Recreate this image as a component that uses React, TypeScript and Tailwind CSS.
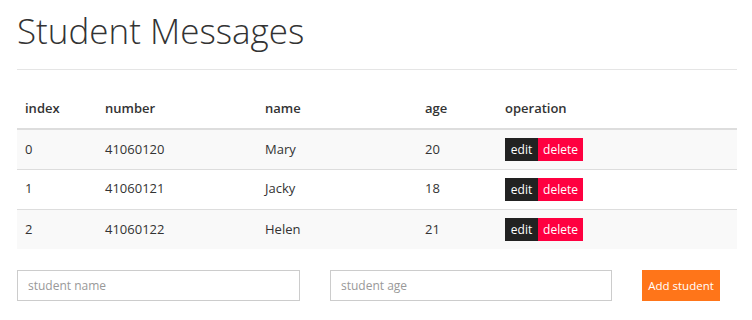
const students = [
  { index: 0, number: "41060120", name: "Mary", age: 20 },
  { index: 1, number: "41060121", name: "Jacky", age: 18 },
  { index: 2, number: "41060122", name: "Helen", age: 21 },
];

export default function App() {
  return (
    <div className="w-[752px] h-[320px] bg-white text-[#333] font-['Open_Sans',sans-serif] overflow-hidden">
      <div className="w-[720px] ml-[17px]">
        <h1 className="pt-[11px] h-[70px] text-[35px] font-light leading-[40px] border-b border-[#e5e5e5]">
          Student Messages
        </h1>

        <table className="mt-[19px] w-[720px] table-fixed border-collapse text-[13px]">
          <colgroup>
            <col className="w-[80px]" />
            <col className="w-[160px]" />
            <col className="w-[160px]" />
            <col className="w-[80px]" />
            <col />
          </colgroup>
          <thead>
            <tr className="h-[40px] border-b-2 border-[#ddd]">
              <th className="pl-2 text-left font-semibold">index</th>
              <th className="pl-2 text-left font-semibold">number</th>
              <th className="pl-2 text-left font-semibold">name</th>
              <th className="pl-2 text-left font-semibold">age</th>
              <th className="pl-2 text-left font-semibold">operation</th>
            </tr>
          </thead>
          <tbody>
            {students.map((s, i) => (
              <tr
                key={s.index}
                className={`h-[40px] ${i % 2 === 0 ? "bg-[#f9f9f9]" : "bg-white"} ${
                  i < students.length - 1 ? "border-b border-[#ddd]" : ""
                }`}
              >
                <td className="pl-2">{s.index}</td>
                <td className="pl-2">{s.number}</td>
                <td className="pl-2">{s.name}</td>
                <td className="pl-2">{s.age}</td>
                <td className="pl-2">
                  <div className="flex text-[12px] text-white leading-[23px]">
                    <button className="w-[33px] h-[23px] bg-[#222]">edit</button>
                    <button className="w-[45px] h-[23px] bg-[#ff0040]">delete</button>
                  </div>
                </td>
              </tr>
            ))}
          </tbody>
        </table>

        <div className="mt-[21px] flex items-center">
          <input
            placeholder="student name"
            className="w-[283px] h-[31px] border border-[#ccc] px-[10px] text-[12px] placeholder:text-[#999] outline-none"
          />
          <input
            placeholder="student age"
            className="ml-[30px] w-[282px] h-[31px] border border-[#ccc] px-[10px] text-[12px] placeholder:text-[#999] outline-none"
          />
          <button className="ml-[30px] w-[78px] h-[31px] bg-[#ff7519] text-white text-[11.5px]">
            Add student
          </button>
        </div>
      </div>
    </div>
  );
}
